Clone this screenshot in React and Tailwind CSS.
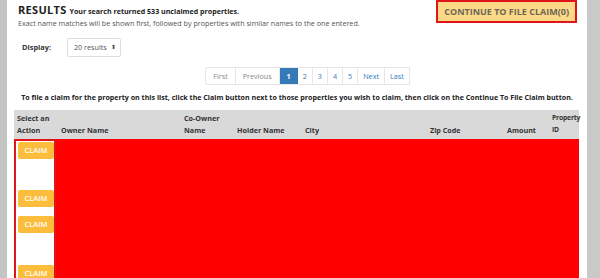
import React from 'react';

const pages = ['First', 'Previous', '1', '2', '3', '4', '5', 'Next', 'Last'];

const ClaimButton = () => (
  <div className="h-[17px] w-[36px] shrink-0 bg-[#fbbd3b] rounded-[2px] text-white text-[7.5px] font-semibold flex items-center justify-center">
    CLAIM
  </div>
);

export default function App() {
  return (
    <div className="w-[600px] h-[278px] overflow-hidden flex bg-[#c9c9c9]" style={{ fontFamily: '"Open Sans", sans-serif' }}>
      <div className="w-[7px] shrink-0 bg-[#c4c4c4]" />
      <div className="w-[580px] min-w-0 shrink-0 bg-white flex flex-col">
        {/* header */}
        <div className="flex justify-between items-start pl-[11px] pr-[10px]">
          <div className="pt-[3px]">
            <div className="flex items-baseline gap-[3px] h-[14px]">
              <span className="text-[11px] font-bold text-[#222] leading-[14px] tracking-[0.3px]">RESULTS</span>
              <span className="text-[7.1px] font-bold text-[#222] leading-[14px]">Your search returned 533 unclaimed properties.</span>
            </div>
            <div className="text-[7.2px] leading-[10px] text-[#555] mt-[1px] whitespace-nowrap">
              Exact name matches will be shown first, followed by properties with similar names to the one entered.
            </div>
          </div>
          <div className="h-[23px] px-[6px] border-2 border-[#e0151a] bg-[#fcd986] flex items-center text-[9px] font-bold text-[#6d6656] whitespace-nowrap">
            CONTINUE TO FILE CLAIM(0)
          </div>
        </div>

        {/* display select */}
        <div className="flex items-center mt-[10px] pl-[15px]">
          <span className="text-[7.4px] font-bold text-[#333] w-[45px]">Display:</span>
          <div className="h-[19px] w-[54px] border border-[#ddd] rounded-[2px] flex items-center px-[6px] text-[7.2px] text-[#555] gap-[4px] whitespace-nowrap">
            20 results <span className="text-[6px] text-[#444]">⬍</span>
          </div>
        </div>

        {/* pagination */}
        <div className="flex justify-center mt-[10px] pl-[21px]">
          <div className="flex h-[18px] border border-[#e6e6e6] rounded-[2px] text-[7.2px]">
            {pages.map((p, i) => (
              <div
                key={p}
                className={
                  p === '1'
                    ? 'px-[7px] flex items-center bg-[#337ab7] text-white font-bold'
                    : i < 2
                    ? 'px-[7px] flex items-center text-[#888] border-r border-[#e6e6e6]'
                    : 'px-[5px] flex items-center text-[#337ab7] border-r border-[#e6e6e6] last:border-r-0'
                }
              >
                {p}
              </div>
            ))}
          </div>
        </div>

        {/* instruction */}
        <div className="text-center text-[7.1px] leading-[10px] font-bold text-[#222] mt-[7px] whitespace-nowrap">
          To file a claim for the property on this list, click the Claim button next to those properties you wish to claim, then click on the Continue To File Claim button.
        </div>

        {/* table */}
        <div className="mt-[8px] ml-[7px] mr-[8px] flex flex-col flex-1 min-w-0">
          <div className="h-[29px] bg-[#d9d9d9] flex items-end pb-[3px] text-[7.2px] font-bold text-[#333] leading-[12px] min-w-0">
            <div className="w-[43px] shrink-0 pl-[3px]">Select an<br />Action</div>
            <div className="w-[123px] shrink-0 pl-[4px]">Owner Name</div>
            <div className="w-[53px] shrink-0 pl-[4px]">Co-Owner<br />Name</div>
            <div className="w-[67px] shrink-0 pl-[4px]">Holder Name</div>
            <div className="w-[125px] shrink-0 pl-[5px]">City</div>
            <div className="w-[75px] shrink-0 pl-[5px]">Zip Code</div>
            <div className="w-[50px] shrink-0 text-right pr-[14px]">Amount</div>
            <div className="flex-1 min-w-0 pl-[2px] whitespace-nowrap text-[6.8px] tracking-[-0.2px]">Property<br />ID</div>
          </div>
          <div className="flex flex-1">
            <div className="w-[42px] shrink-0 border-2 border-[#e0151a] flex flex-col pl-[2px] pt-[1px] mb-[2px]">
              <ClaimButton />
              <div className="h-[31px] shrink-0" />
              <ClaimButton />
              <div className="h-[9px] shrink-0" />
              <ClaimButton />
              <div className="h-[32px] shrink-0" />
              <ClaimButton />
            </div>
            <div className="flex-1 bg-[#ff0000]" />
          </div>
        </div>
      </div>
      <div className="w-[13px] shrink-0 bg-[#c9c9c9]" />
    </div>
  );
}
